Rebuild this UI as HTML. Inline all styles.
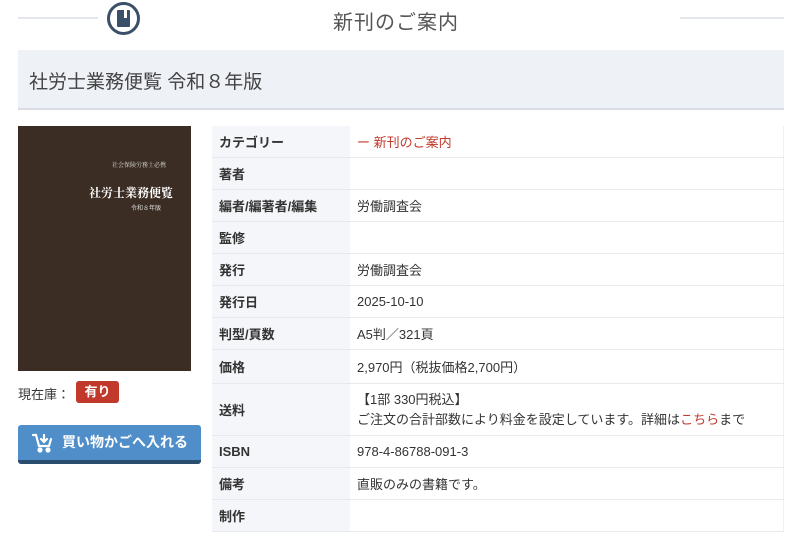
<!DOCTYPE html><html><head><meta charset="utf-8"><style>
body{margin:0;width:800px;height:547px;background:#fff;font-family:"Liberation Sans","Noto Sans CJK JP",sans-serif;color:#333;overflow:hidden;position:relative}
.a{position:absolute}
table{border-collapse:collapse;position:absolute;left:212px;top:126px;width:572px;font-size:13px}
td{border-bottom:1px solid #e6e9ee;height:31px;padding:0 0 0 7px}
td.l{background:#f4f6f9;width:131px;font-weight:bold;color:#333}
td.v{border-right:1px solid #eef0f3}
</style></head><body>
<div class="a" style="left:18px;top:17px;width:80px;height:2px;background:#e3e6ea"></div>
<div class="a" style="left:680px;top:17px;width:104px;height:2px;background:#e3e6ea"></div>
<div class="a" style="left:107px;top:2px;width:33px;height:33px;border:3px solid #3a5068;border-radius:50%;box-sizing:border-box"></div>
<div class="a" style="left:117px;top:10px;width:13px;height:17px;background:#3a5068;border-radius:1px"></div>
<div class="a" style="left:124px;top:10px;width:3px;height:8px;background:#fff"></div>
<div class="a" style="left:333px;top:6px;font-size:20px;color:#555;letter-spacing:1px">新刊のご案内</div>
<div class="a" style="left:18px;top:50px;width:766px;height:58px;background:#eef1f6;border-bottom:2px solid #d9dde3"></div>
<div class="a" style="left:29px;top:67px;font-size:19px;color:#444">社労士業務便覧 令和８年版</div>
<div class="a" style="left:18px;top:126px;width:173px;height:245px;background:#3b2d23"></div>
<div class="a" style="left:112px;top:160px;font-size:6px;color:#ddd;font-family:'Noto Serif CJK SC',serif">社会保険労務士必携</div>
<div class="a" style="left:89px;top:184px;font-size:12px;color:#fff;font-weight:bold;font-family:'Noto Serif CJK SC',serif">社労士業務便覧</div>
<div class="a" style="left:131px;top:203px;font-size:6px;color:#ddd">令和８年版</div>
<div class="a" style="left:18px;top:384px;font-size:13px">現在庫：</div>
<div class="a" style="left:76px;top:381px;width:43px;height:22px;background:#c0392b;border-radius:3px;color:#fff;font-size:13px;font-weight:bold;text-align:center;line-height:22px">有り</div>
<div class="a" style="left:18px;top:425px;width:183px;height:35px;background:#4f8ec9;border-bottom:4px solid #2b4d6e;border-radius:3px;color:#fff;font-weight:bold;font-size:14px;line-height:35px">
<svg class="a" style="left:13px;top:7px" width="22" height="22" viewBox="0 0 22 22" fill="none" stroke="#fff" stroke-width="2.2" stroke-linecap="round"><path d="M2 3h3l3 11h10l2-7"/><path d="M13 3v7M10 7l3 3 3-3"/><circle cx="9" cy="18" r="1.5" fill="#fff"/><circle cx="17" cy="18" r="1.5" fill="#fff"/></svg>
<span style="margin-left:44px">買い物かごへ入れる</span></div>
<table>
<tr><td class="l">カテゴリー</td><td class="v" style="color:#c0392b">ー 新刊のご案内</td></tr>
<tr><td class="l">著者</td><td class="v"></td></tr>
<tr><td class="l">編者/編著者/編集</td><td class="v">労働調査会</td></tr>
<tr><td class="l">監修</td><td class="v"></td></tr>
<tr><td class="l">発行</td><td class="v">労働調査会</td></tr>
<tr><td class="l">発行日</td><td class="v">2025-10-10</td></tr>
<tr><td class="l">判型/頁数</td><td class="v">A5判／321頁</td></tr>
<tr><td class="l" style="height:33px">価格</td><td class="v">2,970円（税抜価格2,700円）</td></tr>
<tr><td class="l" style="height:51px">送料</td><td class="v" style="line-height:20px">【1部 330円税込】<br>ご注文の合計部数により料金を設定しています。詳細は<span style="color:#c0392b">こちら</span>まで</td></tr>
<tr><td class="l">ISBN</td><td class="v">978-4-86788-091-3</td></tr>
<tr><td class="l">備考</td><td class="v">直販のみの書籍です。</td></tr>
<tr><td class="l">制作</td><td class="v"></td></tr>
</table>
</body></html>
